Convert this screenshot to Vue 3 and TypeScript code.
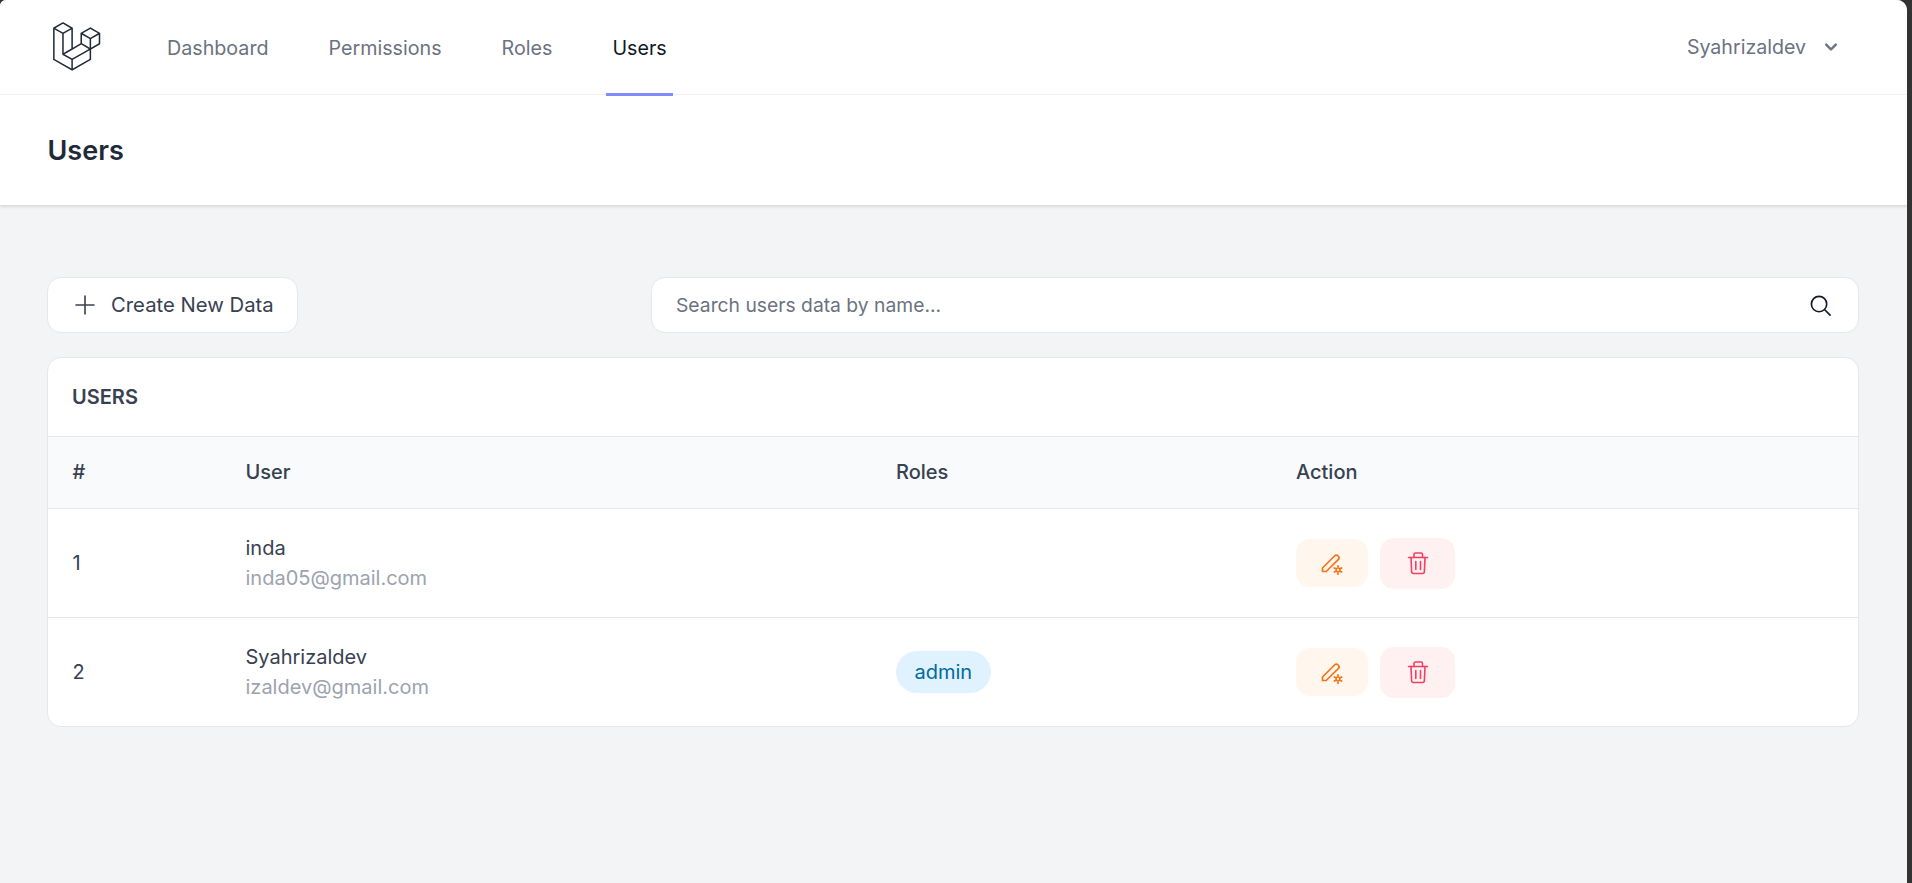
<script setup lang="ts">
interface UserRow {
  id: number
  name: string
  email: string
  roles: string[]
}

const links: string[] = ['Dashboard', 'Permissions', 'Roles', 'Users']
const users: UserRow[] = [
  { id: 1, name: 'inda', email: 'inda05@gmail.com', roles: [] },
  { id: 2, name: 'Syahrizaldev', email: 'izaldev@gmail.com', roles: ['admin'] },
]
const teeth: number[] = [0, 60, 120, 180, 240, 300]
</script>

<template>
  <div class="window">
    <div class="page">
      <header class="top">
        <nav class="nav">
          <div class="nav-left">
            <svg class="logo" viewBox="0 0 316 316" xmlns="http://www.w3.org/2000/svg">
              <path fill="#1f2937" d="M305.8 81.125C305.77 80.995 305.69 80.885 305.65 80.755C305.56 80.525 305.49 80.285 305.37 80.075C305.29 79.935 305.17 79.815 305.07 79.685C304.94 79.515 304.83 79.325 304.68 79.175C304.55 79.045 304.39 78.955 304.25 78.845C304.09 78.715 303.95 78.575 303.77 78.475L251.32 48.275C249.97 47.495 248.31 47.495 246.96 48.275L194.51 78.475C194.33 78.575 194.19 78.725 194.03 78.845C193.89 78.955 193.73 79.045 193.6 79.175C193.45 79.325 193.34 79.515 193.21 79.685C193.11 79.815 192.99 79.935 192.91 80.075C192.79 80.285 192.71 80.525 192.63 80.755C192.58 80.875 192.51 80.995 192.48 81.125C192.38 81.495 192.33 81.875 192.33 82.265V139.625L148.62 164.795V52.575C148.62 52.185 148.57 51.805 148.47 51.435C148.44 51.305 148.36 51.195 148.32 51.065C148.23 50.835 148.16 50.595 148.04 50.385C147.96 50.245 147.84 50.125 147.74 49.995C147.61 49.825 147.5 49.635 147.35 49.485C147.22 49.355 147.06 49.265 146.92 49.155C146.76 49.025 146.62 48.885 146.44 48.785L93.99 18.585C92.64 17.805 90.98 17.805 89.63 18.585L37.18 48.785C37 48.885 36.86 49.035 36.7 49.155C36.56 49.265 36.4 49.355 36.27 49.485C36.12 49.635 36.01 49.825 35.88 49.995C35.78 50.125 35.66 50.245 35.58 50.385C35.46 50.595 35.38 50.835 35.3 51.065C35.25 51.185 35.18 51.305 35.15 51.435C35.05 51.805 35 52.185 35 52.575V232.235C35 233.795 35.84 235.245 37.19 236.025L142.1 296.425C142.33 296.555 142.58 296.635 142.82 296.725C142.93 296.765 143.04 296.835 143.16 296.865C143.53 296.965 143.9 297.015 144.28 297.015C144.66 297.015 145.03 296.965 145.4 296.865C145.5 296.835 145.59 296.775 145.69 296.745C145.95 296.655 146.21 296.565 146.45 296.435L251.36 236.035C252.72 235.255 253.55 233.815 253.55 232.245V174.885L303.81 145.945C305.17 145.165 306 143.725 306 142.155V82.265C305.95 81.875 305.89 81.495 305.8 81.125ZM144.2 227.205L100.57 202.515L146.39 176.135L196.66 147.195L240.33 172.335L208.29 190.625L144.2 227.205ZM244.75 114.995V164.795L226.39 154.225L201.03 139.625V89.825L219.39 100.395L244.75 114.995ZM249.12 57.105L292.81 82.265L249.12 107.425L205.43 82.265L249.12 57.105ZM114.49 184.425L96.13 194.995V85.305L121.49 70.705L139.85 60.135V169.815L114.49 184.425ZM91.76 27.425L135.45 52.585L91.76 77.745L48.07 52.585L91.76 27.425ZM43.67 60.135L62.03 70.705L87.39 85.305V202.545V202.555V202.565C87.39 202.735 87.44 202.895 87.46 203.055C87.49 203.265 87.49 203.485 87.55 203.695V203.705C87.6 203.875 87.69 204.035 87.76 204.195C87.84 204.375 87.89 204.575 87.99 204.745C87.99 204.745 87.99 204.755 88 204.755C88.09 204.905 88.22 205.035 88.33 205.175C88.45 205.335 88.55 205.495 88.69 205.635L88.7 205.645C88.82 205.765 88.98 205.855 89.12 205.965C89.28 206.085 89.42 206.225 89.59 206.325C89.6 206.325 89.6 206.325 89.61 206.335C89.62 206.335 89.62 206.345 89.63 206.345L139.87 234.775V285.065L43.67 229.705V60.135ZM244.75 229.705L148.58 285.075V234.775L219.8 194.115L244.75 179.875V229.705ZM297.2 139.625L253.49 164.795V114.995L278.85 100.395L297.21 89.825V139.625H297.2Z" />
            </svg>
            <ul class="links">
              <li v-for="link in links" :key="link" class="link" :class="{ active: link === 'Users' }">{{ link }}</li>
            </ul>
          </div>
          <button class="user-btn" type="button">
            <span>Syahrizaldev</span>
            <svg class="chevron" viewBox="0 0 20 20" fill="currentColor">
              <path fill-rule="evenodd" clip-rule="evenodd" d="M5.293 7.293a1 1 0 011.414 0L10 10.586l3.293-3.293a1 1 0 111.414 1.414l-4 4a1 1 0 01-1.414 0l-4-4a1 1 0 010-1.414z" />
            </svg>
          </button>
        </nav>
        <div class="title-bar">
          <h1 class="title">Users</h1>
        </div>
      </header>

      <main class="content">
        <div class="toolbar">
          <button class="create" type="button">
            <svg class="plus" viewBox="0 0 24 24" fill="none" stroke="currentColor" stroke-width="1.6" stroke-linecap="round">
              <path d="M12 3v18M3 12h18" />
            </svg>
            <span class="create-label">Create New Data</span>
          </button>
          <label class="search">
            <input class="search-input" type="text" placeholder="Search users data by name..." />
            <svg class="search-icon" viewBox="0 0 24 24" fill="none" stroke="#111827" stroke-width="1.7" stroke-linecap="round">
              <circle cx="10.5" cy="10.5" r="8" />
              <path d="M16.4 16.4L22 22" />
            </svg>
          </label>
        </div>

        <section class="card">
          <div class="card-title">USERS</div>
          <table class="table">
            <thead>
              <tr>
                <th class="col-num">#</th>
                <th class="col-user">User</th>
                <th class="col-roles">Roles</th>
                <th>Action</th>
              </tr>
            </thead>
            <tbody>
              <tr v-for="u in users" :key="u.id">
                <td>{{ u.id }}</td>
                <td>
                  <div class="name">{{ u.name }}</div>
                  <div class="email">{{ u.email }}</div>
                </td>
                <td>
                  <span v-for="r in u.roles" :key="r" class="pill">{{ r }}</span>
                </td>
                <td>
                  <div class="actions">
                    <button class="act edit" type="button" aria-label="Edit">
                      <svg viewBox="0 0 24 24" fill="none" stroke="currentColor" stroke-width="1.7" stroke-linecap="round" stroke-linejoin="round" class="act-icon">
                        <path d="M2.500 20.500V17L14.500 5a2.600 2.600 0 0 1 3.700 3.700L6.200 20.500z" />
                        <circle cx="18" cy="19" r="1.900" stroke-width="1.500" />
                        <path v-for="t in teeth" :key="t" d="M18 14.800V16" stroke-width="1.700" :transform="`rotate(${t} 18 19)`" />
                      </svg>
                    </button>
                    <button class="act del" type="button" aria-label="Delete">
                      <svg viewBox="0 0 24 24" fill="none" stroke="currentColor" stroke-width="1.6" stroke-linecap="round" stroke-linejoin="round" class="act-icon">
                        <path d="M2.500 6.500h19" />
                        <path d="M8 6.500V3.500A1.500 1.500 0 0 1 9.500 2h5.500a1.500 1.500 0 0 1 1.500 1.500v3" />
                        <path d="M5 6.500l.6 14a2 2 0 0 0 2 2h8.800a2 2 0 0 0 2-2l.6-14" />
                        <path d="M9.800 10.500v8M14.500 10.500v8" />
                      </svg>
                    </button>
                  </div>
                </td>
              </tr>
            </tbody>
          </table>
        </section>
      </main>
    </div>
  </div>
</template>

<style>
html, body {
  margin: 0;
  background: #333333;
}
</style>

<style scoped>
.window {
  width: 1912px;
  height: 883px;
  overflow: hidden;
  background: #333333;
  font-family: Inter, "Noto Sans", sans-serif;
}
.page {
  width: 1907px;
  height: 883px;
  background: #f3f4f6;
  border-radius: 6px 10px 0 0;
  overflow: hidden;
}
.top {
  background: #ffffff;
  box-shadow: 0 1px 3px rgba(0, 0, 0, 0.1), 0 2px 4px rgba(0, 0, 0, 0.05);
}
.nav {
  height: 94px;
  border-bottom: 1px solid #f0f1f3;
  padding: 0 48px;
  display: flex;
  justify-content: space-between;
  align-items: stretch;
}
.nav-left {
  display: flex;
  align-items: stretch;
}
.logo {
  width: 55px;
  height: 55px;
  margin: 19px 0 0 -1px;
}
.links {
  display: flex;
  list-style: none;
  margin: 0 0 0 59px;
  padding: 0;
  gap: 48px;
}
.link {
  position: relative;
  display: flex;
  align-items: center;
  padding: 2px 6px 0;
  font-size: 19.700px;
  color: #6b7280;
}
.link.active {
  color: #111827;
}
.link.active::after {
  content: "";
  position: absolute;
  left: 0;
  right: 0;
  bottom: -2px;
  height: 3px;
  background: #818cf8;
}
.user-btn {
  align-self: center;
  display: flex;
  align-items: center;
  gap: 13px;
  border: 0;
  background: none;
  padding: 0;
  margin-right: 16px;
  font: inherit;
  font-size: 19.600px;
  color: #6b7280;
}
.chevron {
  width: 24px;
  height: 24px;
}
.title-bar {
  height: 110px;
  padding: 0 47.500px;
  display: flex;
  align-items: center;
}
.title {
  margin: 0;
  font-size: 27px;
  font-weight: 600;
  color: #1f2937;
}
.content {
  padding: 72px 0 0 47px;
  width: 1812px;
}
.toolbar {
  display: flex;
  justify-content: space-between;
  margin-bottom: 24px;
}
.create {
  width: 251px;
  height: 56px;
  box-sizing: border-box;
  display: flex;
  align-items: center;
  gap: 14px;
  padding: 0 0 0 25px;
  background: #ffffff;
  border: 1px solid #e5e7eb;
  border-radius: 14px;
  font: inherit;
  font-size: 20.300px;
  color: #374151;
}
.create-label {
  margin-bottom: 2px;
}
.plus {
  width: 24px;
  height: 24px;
  flex: none;
}
.search {
  width: 1208px;
  height: 56px;
  box-sizing: border-box;
  display: flex;
  align-items: center;
  background: #ffffff;
  border: 1px solid #e5e7eb;
  border-radius: 14px;
  padding: 0 26px 0 24px;
}
.search-input {
  flex: 1;
  border: 0;
  outline: 0;
  background: none;
  padding: 0;
  font: inherit;
  font-size: 19.300px;
  color: #374151;
}
.search-input::placeholder {
  color: #6b7280;
  opacity: 1;
}
.search-icon {
  width: 23px;
  height: 23px;
  flex: none;
}
.card {
  background: #ffffff;
  border: 1px solid #e5e7eb;
  border-radius: 14px;
  overflow: hidden;
}
.card-title {
  height: 78px;
  box-sizing: border-box;
  padding-left: 24px;
  display: flex;
  align-items: center;
  font-size: 20px;
  font-weight: 600;
  color: #374151;
}
.table {
  width: 100%;
  border-collapse: collapse;
  table-layout: fixed;
  font-size: 20px;
  color: #374151;
}
.table th {
  height: 70px;
  padding: 0 0 1px 23.500px;
  text-align: left;
  font-weight: 450;
  background: #f9fafb;
  border-top: 1px solid #e5e7eb;
  border-bottom: 1px solid #e5e7eb;
}
.col-num {
  width: 149.500px;
}
.col-user {
  width: 627px;
}
.col-roles {
  width: 376.500px;
}
.table td {
  height: 108px;
  padding: 0 0 0 23.500px;
  border-bottom: 1px solid #e5e7eb;
  vertical-align: middle;
}
.table th:first-child,
.table td:first-child {
  padding-left: 24.500px;
}
.table tr:last-child td {
  border-bottom: 0;
}
.name {
  line-height: 30px;
  color: #374151;
}
.email {
  line-height: 30px;
  color: #9ca3af;
}
.pill {
  display: inline-block;
  height: 42px;
  line-height: 42px;
  padding: 0 18.500px;
  border-radius: 21px;
  background: #e0f2fe;
  color: #0369a1;
}
.actions {
  display: flex;
  align-items: center;
  gap: 12px;
}
.act {
  display: flex;
  align-items: center;
  justify-content: center;
  border: 0;
  padding: 0;
}
.act-icon {
  width: 24px;
  height: 24px;
}
.edit {
  width: 72px;
  height: 48px;
  border-radius: 14px;
  background: #fff7ed;
  color: #f97316;
}
.del {
  width: 75px;
  height: 51px;
  border-radius: 14px;
  background: #fff1f2;
  color: #f43f5e;
}
</style>
